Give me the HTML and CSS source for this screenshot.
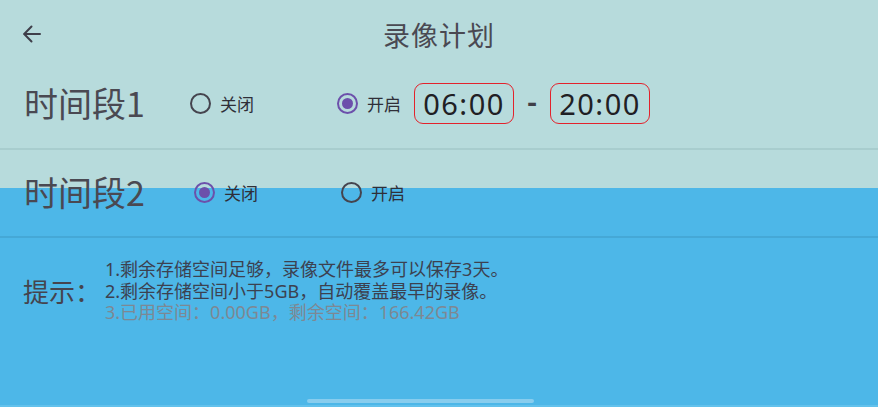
FILE: index.html
```html
<!DOCTYPE html>
<html lang="zh-CN">
<head>
<meta charset="utf-8">
<title>录像计划</title>
<link rel="stylesheet" href="styles.css">
</head>
<body>
<div class="screen">
  <header class="topbar">
    <button class="back" aria-label="返回">
      <svg width="20" height="20" viewBox="0 0 20 20" fill="none" stroke="#3f3f4a" stroke-width="2" stroke-linecap="round" stroke-linejoin="round">
        <path d="M18 10H2.5"/>
        <path d="M9.5 2.5L2.2 10l7.3 7.5"/>
      </svg>
    </button>
    <h1 class="title">录像计划</h1>
  </header>

  <section class="period period-first">
    <div class="period-name">时间段1</div>
    <label class="radio radio-off-a"><span class="dot"></span><span class="radio-text">关闭</span></label>
    <label class="radio radio-on-a checked"><span class="dot"></span><span class="radio-text">开启</span></label>
    <div class="time-box">06:00</div>
    <span class="dash">-</span>
    <div class="time-box">20:00</div>
  </section>

  <section class="period period-second">
    <div class="period-name">时间段2</div>
    <label class="radio radio-off-b checked"><span class="dot"></span><span class="radio-text">关闭</span></label>
    <label class="radio radio-on-b"><span class="dot"></span><span class="radio-text">开启</span></label>
  </section>

  <section class="tips">
    <div class="tips-label">提示：</div>
    <div class="tips-lines">
      <p>1.剩余存储空间足够，录像文件最多可以保存3天。</p>
      <p>2.剩余存储空间小于5GB，自动覆盖最早的录像。</p>
      <p class="muted">3.已用空间：0.00GB，剩余空间：166.42GB</p>
    </div>
  </section>

  <div class="home-bar"></div>
</div>
</body>
</html>
```

FILE: styles.css
```css
html, body {
  margin: 0;
  padding: 0;
}

body {
  width: 878px;
  height: 407px;
  overflow: hidden;
  font-family: "Noto Sans CJK SC", "Noto Sans", sans-serif;
  color: #47464f;
}

.screen {
  position: relative;
  height: 407px;
  background: linear-gradient(to bottom, #b7dbdc 0, #b7dbdc 188px, #4db7e8 188px, #4db7e8 405px, #62c1ec 405px);
}

/* top bar */
.topbar {
  height: 68px;
  display: flex;
  align-items: center;
  justify-content: center;
  position: relative;
}

.back {
  position: absolute;
  left: 22px;
  top: 24px;
  width: 20px;
  height: 20px;
  padding: 0;
  border: 0;
  background: none;
  display: flex;
}

.title {
  margin: 0;
  font-size: 27px;
  font-weight: 400;
  color: #4a4952;
  letter-spacing: 1px;
}

/* time period rows */
.period {
  display: flex;
  align-items: center;
  padding-left: 24px;
  box-sizing: border-box;
}

.period-first {
  height: 82px;
  padding-bottom: 10px;
  border-bottom: 2px solid #a8cdce;
}

.period-second {
  height: 88px;
  padding-bottom: 2px;
  border-bottom: 2px solid #45a8d6;
}

.period-name {
  font-size: 34px;
  line-height: 40px;
  color: #4a4952;
  width: 166px;
}

.period-second .period-name {
  width: 170px;
}

.radio {
  display: flex;
  align-items: center;
  gap: 9px;
  font-size: 17px;
  color: #2f2f38;
}

.radio-off-a,
.radio-off-b {
  width: 147px;
}

.radio-on-a {
  width: 77px;
}

.dot {
  width: 21px;
  height: 21px;
  box-sizing: border-box;
  border: 2px solid #45444e;
  border-radius: 50%;
  display: flex;
  align-items: center;
  justify-content: center;
}

.checked .dot {
  border-color: #6c50ab;
}

.checked .dot::after {
  content: "";
  width: 11px;
  height: 11px;
  border-radius: 50%;
  background: #6c50ab;
}

.time-box {
  width: 100px;
  height: 41px;
  box-sizing: border-box;
  border: 1.5px solid #e3222c;
  border-radius: 9px;
  display: flex;
  align-items: center;
  justify-content: center;
  font-family: "Noto Sans", sans-serif;
  font-size: 29px;
  letter-spacing: 1.5px;
  color: #1f2024;
}

.dash {
  width: 36px;
  text-align: center;
  font-family: "Noto Sans", sans-serif;
  font-size: 30px;
  font-weight: 600;
  line-height: 30px;
  color: #3f3f48;
  margin-top: -2px;
}

/* tips */
.tips {
  display: flex;
  align-items: center;
  padding: 21px 0 0 23px;
}

.tips-label {
  font-size: 26px;
  line-height: 30px;
  width: 82px;
  color: #45444e;
}

.tips-lines p {
  margin: 0;
  font-family: "Noto Sans", "Noto Sans CJK SC", sans-serif;
  font-size: 18px;
  line-height: 21.5px;
  color: #3c4150;
}

.tips-lines .muted {
  color: #7d8893;
}

/* system gesture bar */
.home-bar {
  position: absolute;
  left: 307px;
  top: 399px;
  width: 227px;
  height: 4px;
  border-radius: 2px;
  background: #88cdee;
}
```
